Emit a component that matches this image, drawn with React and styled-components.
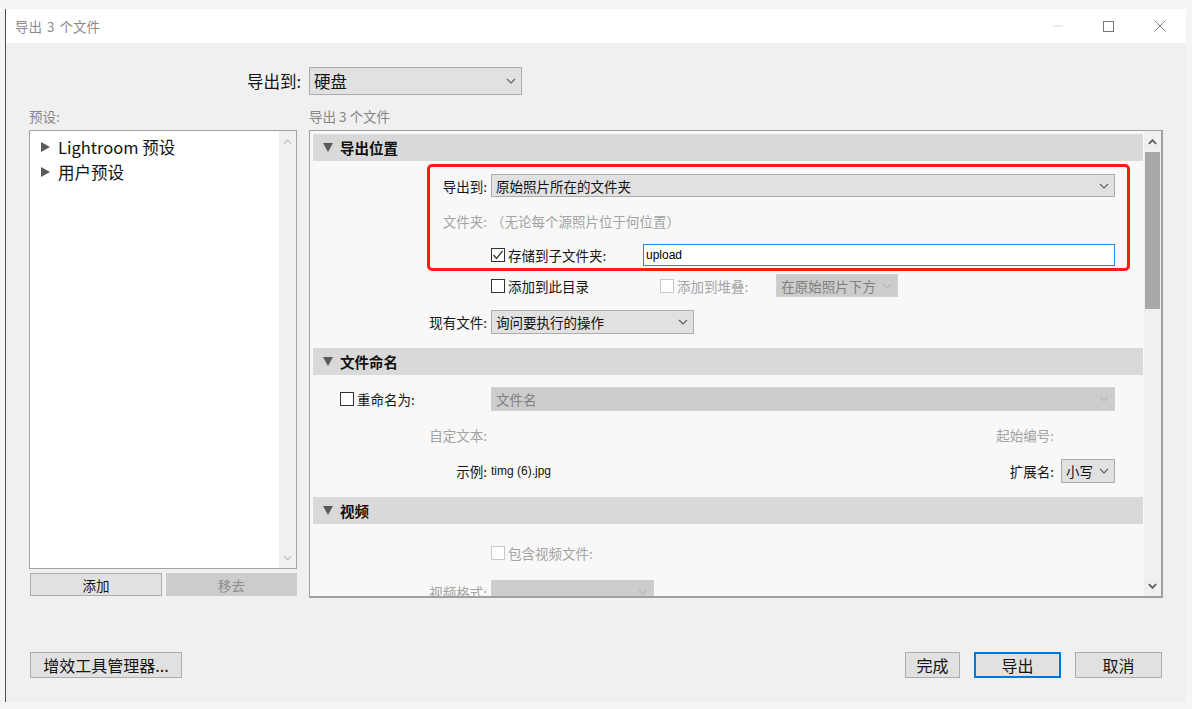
import styled, { createGlobalStyle } from "styled-components";

const GlobalStyle = createGlobalStyle`
  html, body {
    margin: 0;
    padding: 0;
    background: #f5f5f5;
  }
  body {
    font-family: "Noto Sans CJK SC", "Noto Sans", sans-serif;
    color: #141414;
  }
  * {
    box-sizing: border-box;
  }
`;

const Window = styled.div`
  margin: 9px 0 0 5px;
  width: 1181px;
  height: 693px;
  display: flex;
  flex-direction: column;
  border-left: 1px solid #4f4f4f;
  background: #f0f0f0;
`;

const TitleBar = styled.div`
  height: 34px;
  flex: none;
  background: #fff;
  display: flex;
  align-items: center;
  padding: 0 20px 0 9px;
`;

const Title = styled.div`
  flex: 1;
  font-size: 13.5px;
  color: #8a8a8a;
  word-spacing: 2px;
`;

const Controls = styled.div`
  display: flex;
  align-items: center;
  gap: 40px;
`;

const Body = styled.div`
  flex: 1;
  display: grid;
  grid-template-columns: 268px 854px;
  grid-template-rows: 28px 35px 468px auto;
  column-gap: 12px;
  padding: 24px 0 0 23px;
`;

const TopLabel = styled.div`
  justify-self: end;
  align-self: center;
  margin-right: -4px;
  font-size: 16.5px;
`;

const Caption = styled.div`
  align-self: end;
  margin-bottom: 6px;
  line-height: 16px;
  font-size: 13.5px;
  color: #858585;
`;

const LeftColumn = styled.div`
  display: flex;
  flex-direction: column;
  gap: 4px;
`;

const List = styled.div`
  height: 439px;
  display: flex;
  background: #fff;
  border: 1px solid #a3a3a3;
`;

const ListItems = styled.div`
  flex: 1;
  padding: 3px 0 0 11px;
`;

const ListItem = styled.div`
  height: 25px;
  display: flex;
  align-items: center;
  gap: 8px;
  font-size: 16.5px;
  color: #111;
`;

const Scrollbar = styled.div`
  width: 17px;
  flex: none;
  display: flex;
  flex-direction: column;
  align-items: center;
  background: #f0f0f0;
`;

const ArrowBox = styled.div`
  height: 21px;
  width: 100%;
  flex: none;
  display: flex;
  align-items: center;
  justify-content: center;
`;

const Thumb = styled.div`
  width: 15px;
  height: 157px;
  flex: none;
  background: #a8a8a8;
`;

const Fill = styled.div`
  flex: 1;
`;

const ButtonPair = styled.div`
  display: grid;
  grid-template-columns: 132px 131px;
  gap: 4px;
  padding-left: 1px;
`;

const Button = styled.div`
  height: ${(p) => p.$h || 26}px;
  width: ${(p) => (p.$w ? `${p.$w}px` : "auto")};
  display: flex;
  align-items: center;
  justify-content: center;
  background: ${(p) => (p.$disabled ? "#cccccc" : "#e1e1e1")};
  border: ${(p) =>
    p.$primary ? "2px solid #0078d7" : `1px solid ${p.$disabled ? "#cccccc" : "#adadad"}`};
  color: ${(p) => (p.$disabled ? "#8c8c8c" : "#141414")};
  font-size: ${(p) => p.$fs || 16}px;
`;

const Panel = styled.div`
  display: flex;
  border: 1px solid #a0a0a0;
  border-right-width: 2px;
  border-bottom-width: 2px;
  background: #f8f8f8;
  overflow: hidden;
`;

const PanelContent = styled.div`
  flex: 1;
  min-width: 0;
  padding: 3px 1px 0 3px;
  overflow: hidden;
`;

const Header = styled.div`
  height: 27px;
  display: flex;
  align-items: center;
  gap: 7px;
  padding-left: 10px;
  background: #d9d9d9;
  font-size: 14.5px;
  font-weight: 700;
  color: #111;
`;

const SectionBody = styled.div`
  position: relative;
  display: flow-root;
  padding-bottom: 14px;
`;

const Highlight = styled.div`
  position: absolute;
  left: 114px;
  top: 3px;
  width: 703px;
  height: 107px;
  border: 3px solid #ff1a1a;
  border-radius: 5px;
  pointer-events: none;
`;

const Row = styled.div`
  display: grid;
  grid-template-columns: 174px 1fr;
  column-gap: 4px;
  align-items: center;
  height: ${(p) => p.$h || 23}px;
  margin-top: ${(p) => p.$mt || 0}px;
  padding-right: 28px;
  font-size: 13.5px;
`;

const Label = styled.div`
  display: flex;
  align-items: center;
  justify-content: ${(p) => (p.$start ? "flex-start" : "flex-end")};
  padding-left: ${(p) => (p.$start ? 27 : 0)}px;
  color: ${(p) => (p.$muted ? "#a3a3a3" : "#141414")};
  white-space: nowrap;
`;

const Control = styled.div`
  display: flex;
  align-items: center;
  justify-content: ${(p) => (p.$end ? "flex-end" : "flex-start")};
  padding-right: ${(p) => p.$pr || 0}px;
  height: 100%;
  min-width: 0;
  white-space: nowrap;
`;

const Muted = styled.span`
  color: #a3a3a3;
`;

const SelectBox = styled.div`
  display: flex;
  align-items: center;
  justify-content: space-between;
  flex: ${(p) => (p.$w ? "none" : 1)};
  width: ${(p) => (p.$w ? `${p.$w}px` : "auto")};
  height: ${(p) => p.$h || 23}px;
  margin-left: ${(p) => p.$ml || 0}px;
  padding: 0 5px 0 4px;
  background: ${(p) => (p.$disabled ? "#cccccc" : "#e1e1e1")};
  border: 1px solid ${(p) => (p.$disabled ? "#d0d0d0" : "#adadad")};
  color: ${(p) => (p.$disabled ? "#7f7f7f" : "#111")};
  font-size: ${(p) => p.$fs || 13.5}px;
  white-space: nowrap;
`;

const CheckItem = styled.div`
  display: flex;
  align-items: center;
  gap: 3px;
  width: ${(p) => (p.$w ? `${p.$w}px` : "auto")};
  flex: none;
  color: ${(p) => (p.$disabled ? "#a3a3a3" : "#141414")};
`;

const Box = styled.span`
  width: 14px;
  height: 14px;
  flex: none;
  display: inline-flex;
  align-items: center;
  justify-content: center;
  background: #fff;
  border: 1px solid ${(p) => (p.$disabled ? "#c8c8c8" : "#333")};
`;

const TextField = styled.div`
  flex: 1;
  height: 22px;
  display: flex;
  align-items: center;
  padding-left: 2px;
  background: #fff;
  border: 1px solid #2b86d9;
  font-family: "Liberation Sans", Arial, sans-serif;
  font-size: 12px;
  color: #000;
`;

const Sample = styled.span`
  flex: 1;
  font-family: "Liberation Sans", Arial, sans-serif;
  font-size: 12px;
  color: #111;
`;

const Footer = styled.div`
  margin-top: 54px;
  display: flex;
  justify-content: ${(p) => (p.$end ? "flex-end" : "flex-start")};
  gap: 14px;
  padding-left: ${(p) => (p.$end ? 0 : 1)}px;
  padding-right: ${(p) => (p.$end ? 1 : 0)}px;
`;

function Chevron({ up, color = "#5f5f5f", w = 10, h = 6, sw = 1.2 }) {
  return (
    <svg width={w} height={h} viewBox="0 0 10 6">
      <polyline
        points={up ? "1,5 5,1 9,5" : "1,1 5,5 9,1"}
        fill="none"
        stroke={color}
        strokeWidth={sw}
      />
    </svg>
  );
}

function Select({ children, disabled, ...rest }) {
  return (
    <SelectBox $disabled={disabled} {...rest}>
      <span>{children}</span>
      <Chevron color={disabled ? "#b8b8b8" : "#5f5f5f"} />
    </SelectBox>
  );
}

function Check({ checked, disabled, children, w }) {
  return (
    <CheckItem $disabled={disabled} $w={w}>
      <Box $disabled={disabled}>
        {checked && (
          <svg width="12" height="12" viewBox="0 0 12 12">
            <polyline
              points="1.5,6 4.5,9.5 10.5,2"
              fill="none"
              stroke="#333"
              strokeWidth="1.3"
            />
          </svg>
        )}
      </Box>
      {children}
    </CheckItem>
  );
}

function Disclosure({ open }) {
  return open ? (
    <svg width="10" height="9" viewBox="0 0 10 9">
      <polygon points="0,0 10,0 5,9" fill="#5a5a5a" />
    </svg>
  ) : (
    <svg width="9" height="10" viewBox="0 0 9 10">
      <polygon points="0,0 9,5 0,10" fill="#5a5a5a" />
    </svg>
  );
}

function ScrollTrack({ thumb, color }) {
  return (
    <Scrollbar>
      <ArrowBox>
        <Chevron up color={color} w={9} h={6} sw={thumb ? 2 : 1.4} />
      </ArrowBox>
      {thumb && <Thumb />}
      <Fill />
      <ArrowBox>
        <Chevron color={color} w={9} h={6} sw={thumb ? 2 : 1.4} />
      </ArrowBox>
    </Scrollbar>
  );
}

export default function App() {
  return (
    <>
      <GlobalStyle />
      <Window>
        <TitleBar>
          <Title>导出 3 个文件</Title>
          <Controls>
            <svg width="10" height="2" viewBox="0 0 10 2">
              <line x1="0" y1="1" x2="10" y2="1" stroke="#d8d8d8" strokeWidth="1" />
            </svg>
            <svg width="11" height="11" viewBox="0 0 11 11">
              <rect x="0.5" y="0.5" width="10" height="10" fill="none" stroke="#777" />
            </svg>
            <svg width="12" height="12" viewBox="0 0 12 12">
              <line x1="0.5" y1="0.5" x2="11.5" y2="11.5" stroke="#888" />
              <line x1="11.5" y1="0.5" x2="0.5" y2="11.5" stroke="#888" />
            </svg>
          </Controls>
        </TitleBar>

        <Body>
          <TopLabel>导出到:</TopLabel>
          <Select $w={213} $h={28} $fs={16.5}>
            硬盘
          </Select>

          <Caption>预设:</Caption>
          <Caption>导出 3 个文件</Caption>

          <LeftColumn>
            <List>
              <ListItems>
                <ListItem>
                  <Disclosure />
                  Lightroom 预设
                </ListItem>
                <ListItem>
                  <Disclosure />
                  用户预设
                </ListItem>
              </ListItems>
              <ScrollTrack color="#c4c4c4" />
            </List>
            <ButtonPair>
              <Button $h={23} $fs={13.5}>
                添加
              </Button>
              <Button $h={23} $fs={13.5} $disabled>
                移去
              </Button>
            </ButtonPair>
          </LeftColumn>

          <Panel>
            <PanelContent>
              <Header>
                <Disclosure open />
                导出位置
              </Header>
              <SectionBody>
                <Row $mt={13}>
                  <Label>导出到:</Label>
                  <Control>
                    <Select>原始照片所在的文件夹</Select>
                  </Control>
                </Row>
                <Row $mt={12}>
                  <Label $muted>文件夹:</Label>
                  <Control>
                    <Muted>（无论每个源照片位于何位置）</Muted>
                  </Control>
                </Row>
                <Row $mt={11}>
                  <Label />
                  <Control>
                    <Check checked w={152}>
                      存储到子文件夹:
                    </Check>
                    <TextField>upload</TextField>
                  </Control>
                </Row>
                <Row $mt={8}>
                  <Label />
                  <Control>
                    <Check w={169}>添加到此目录</Check>
                    <Check disabled>添加到堆叠:</Check>
                    <Select disabled $w={122} $ml={28}>
                      在原始照片下方
                    </Select>
                  </Control>
                </Row>
                <Row $mt={13} $h={24}>
                  <Label>现有文件:</Label>
                  <Control>
                    <Select $w={203} $h={24}>
                      询问要执行的操作
                    </Select>
                  </Control>
                </Row>
                <Highlight />
              </SectionBody>

              <Header>
                <Disclosure open />
                文件命名
              </Header>
              <SectionBody>
                <Row $mt={12} $h={24}>
                  <Label $start>
                    <Check>重命名为:</Check>
                  </Label>
                  <Control>
                    <Select disabled $h={24}>
                      文件名
                    </Select>
                  </Control>
                </Row>
                <Row $mt={12} $h={24}>
                  <Label $muted>自定文本:</Label>
                  <Control $end $pr={61}>
                    <Muted>起始编号:</Muted>
                  </Control>
                </Row>
                <Row $mt={12} $h={24}>
                  <Label>示例:</Label>
                  <Control>
                    <Sample>timg (6).jpg</Sample>
                    <span>扩展名:</span>
                    <Select $w={54} $h={24} $ml={7}>
                      小写
                    </Select>
                  </Control>
                </Row>
              </SectionBody>

              <Header>
                <Disclosure open />
                视频
              </Header>
              <SectionBody>
                <Row $mt={17} $h={24}>
                  <Label />
                  <Control>
                    <Check disabled>包含视频文件:</Check>
                  </Control>
                </Row>
                <Row $mt={15} $h={24}>
                  <Label $muted>视频格式:</Label>
                  <Control>
                    <Select disabled $w={163} $h={24} />
                  </Control>
                </Row>
              </SectionBody>
            </PanelContent>
            <ScrollTrack thumb color="#5a5a5a" />
          </Panel>

          <Footer>
            <Button $w={152}>增效工具管理器...</Button>
          </Footer>
          <Footer $end>
            <Button $w={55}>完成</Button>
            <Button $w={87} $primary>
              导出
            </Button>
            <Button $w={87}>取消</Button>
          </Footer>
        </Body>
      </Window>
    </>
  );
}
